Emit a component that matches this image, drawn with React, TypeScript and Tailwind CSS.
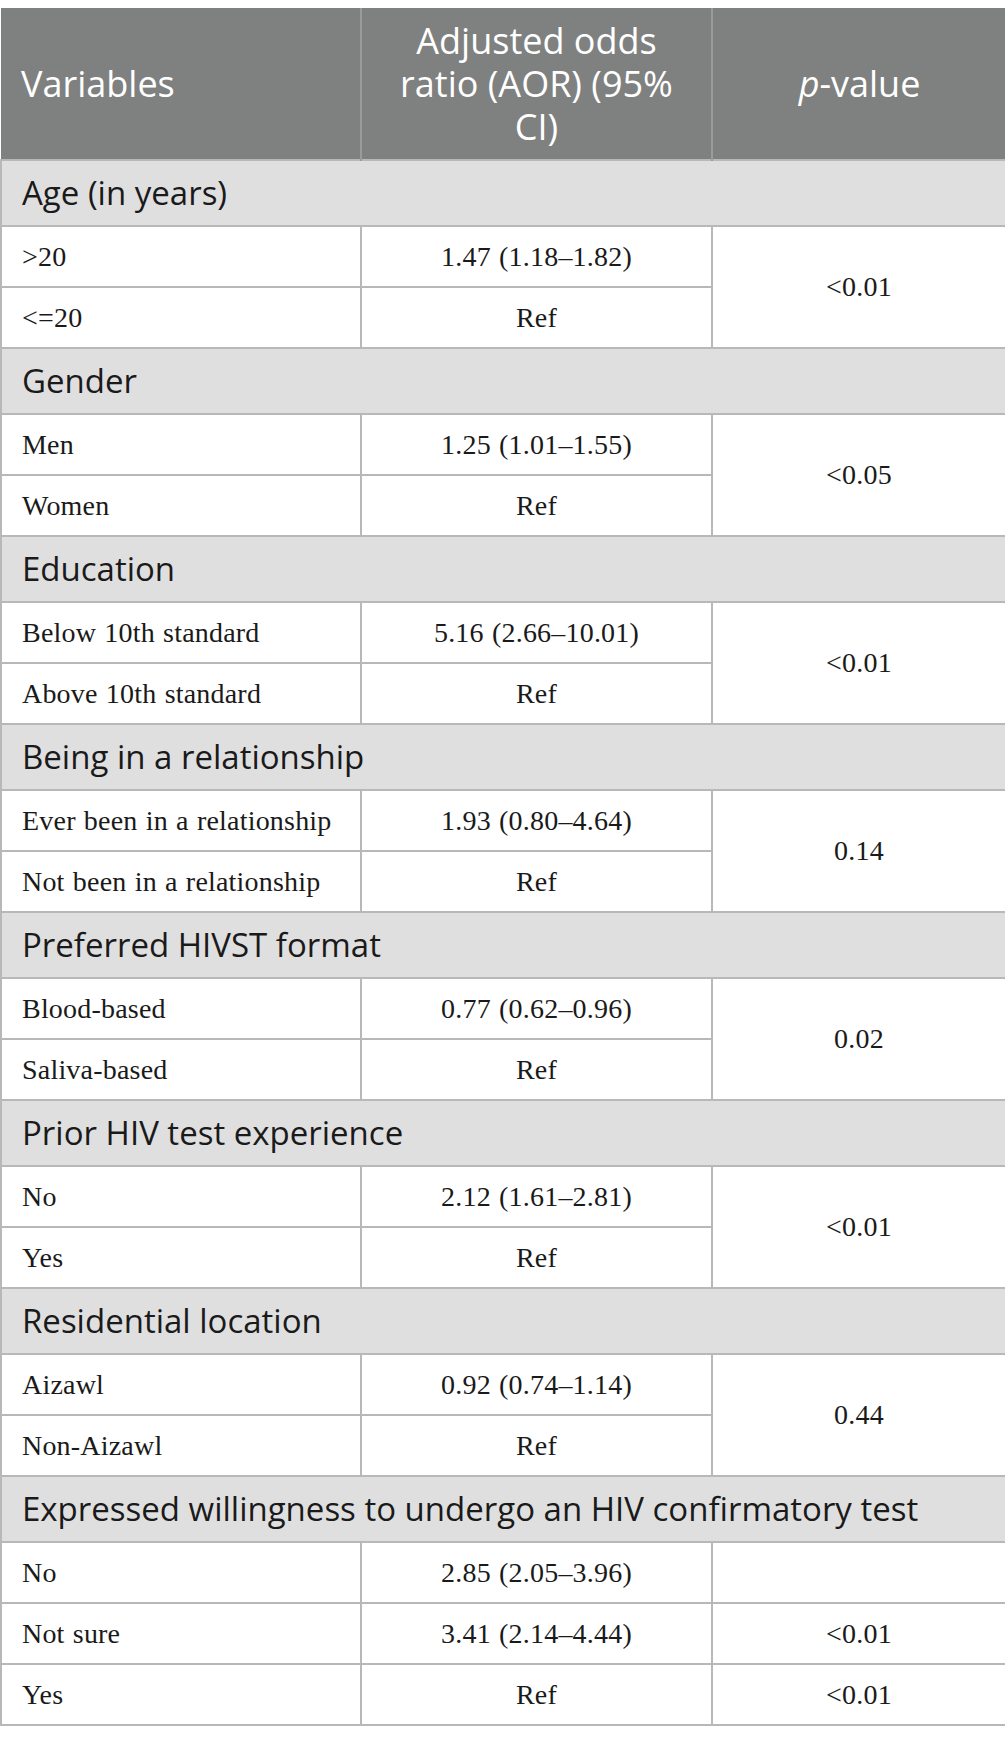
import React from 'react'

type Row = { label: string; aor: string; p?: string; span?: number }
type Section = { title: string; rows: Row[] }

const sections: Section[] = [
    { title: 'Age (in years)', rows: [{ label: '>20', aor: '1.47 (1.18–1.82)', p: '<0.01', span: 2 }, { label: '<=20', aor: 'Ref' }] },
    { title: 'Gender', rows: [{ label: 'Men', aor: '1.25 (1.01–1.55)', p: '<0.05', span: 2 }, { label: 'Women', aor: 'Ref' }] },
    { title: 'Education', rows: [{ label: 'Below 10th standard', aor: '5.16 (2.66–10.01)', p: '<0.01', span: 2 }, { label: 'Above 10th standard', aor: 'Ref' }] },
    { title: 'Being in a relationship', rows: [{ label: 'Ever been in a relationship', aor: '1.93 (0.80–4.64)', p: '0.14', span: 2 }, { label: 'Not been in a relationship', aor: 'Ref' }] },
    { title: 'Preferred HIVST format', rows: [{ label: 'Blood-based', aor: '0.77 (0.62–0.96)', p: '0.02', span: 2 }, { label: 'Saliva-based', aor: 'Ref' }] },
    { title: 'Prior HIV test experience', rows: [{ label: 'No', aor: '2.12 (1.61–2.81)', p: '<0.01', span: 2 }, { label: 'Yes', aor: 'Ref' }] },
    { title: 'Residential location', rows: [{ label: 'Aizawl', aor: '0.92 (0.74–1.14)', p: '0.44', span: 2 }, { label: 'Non-Aizawl', aor: 'Ref' }] },
    {
        title: 'Expressed willingness to undergo an HIV confirmatory test',
        rows: [
            { label: 'No', aor: '2.85 (2.05–3.96)', p: '', span: 1 },
            { label: 'Not sure', aor: '3.41 (2.14–4.44)', p: '<0.01', span: 1 },
            { label: 'Yes', aor: 'Ref', p: '<0.01', span: 1 },
        ],
    },
]

const sans = "font-['Open_Sans',sans-serif]"
const serif = "font-['Liberation_Serif',serif]"

const App = () => {
    return (
        <div className="w-[1005px] bg-white pt-[8px] pb-[18px]">
            <table className="w-[1005px] table-fixed border-collapse">
                <colgroup>
                    <col className="w-[360px]" />
                    <col className="w-[351px]" />
                    <col className="w-[294px]" />
                </colgroup>
                <thead>
                    <tr className={`h-[152px] bg-[#7f8180] text-white text-[36px] leading-[43px] ${sans}`}>
                        <th className="border-r-2 border-[#9a9b9b] pl-[20px] text-left font-normal">Variables</th>
                        <th className="border-r-2 border-[#9a9b9b] text-center font-normal">
                            Adjusted odds<br />ratio (AOR) (95%<br />CI)
                        </th>
                        <th className="text-center font-normal">
                            <span className="italic">p</span>-value
                        </th>
                    </tr>
                </thead>
                <tbody>
                    {sections.map((s) => (
                        <React.Fragment key={s.title}>
                            <tr className="h-[66px] bg-[#e0dfe0]">
                                <td colSpan={3} className={`border-2 border-[#b8b8b8] pl-[20px] text-[33px] text-[#1a1a1a] ${sans}`}>
                                    {s.title}
                                </td>
                            </tr>
                            {s.rows.map((r) => (
                                <tr key={r.label} className={`h-[61px] text-[28px] tracking-[0.2px] [word-spacing:1px] text-[#1a1a1a] ${serif}`}>
                                    <td className="border-2 border-[#b8b8b8] pl-[20px]">{r.label}</td>
                                    <td className="border-2 border-[#b8b8b8] text-center">{r.aor}</td>
                                    {r.span !== undefined && (
                                        <td rowSpan={r.span} className="border-2 border-[#b8b8b8] text-center">
                                            {r.p}
                                        </td>
                                    )}
                                </tr>
                            ))}
                        </React.Fragment>
                    ))}
                </tbody>
            </table>
        </div>
    )
}

export default App
